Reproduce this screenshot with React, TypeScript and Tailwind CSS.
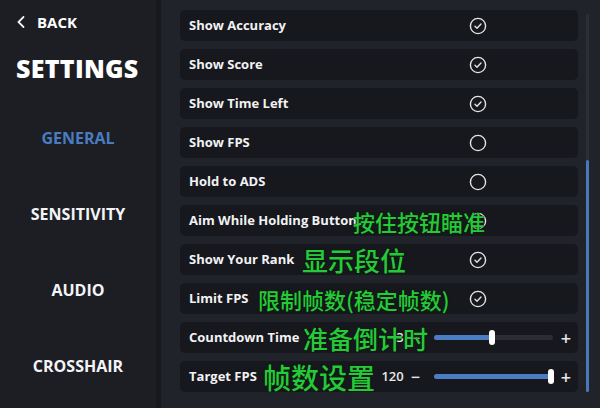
import type { ReactNode } from 'react';

type Row = {
  label: string;
  kind: 'check' | 'empty' | 'slider';
  value?: string;
  fill?: number;
  note?: { text: string; left: number; size: string };
};

const ROWS: Row[] = [
  { label: 'Show Accuracy', kind: 'check' },
  { label: 'Show Score', kind: 'check' },
  { label: 'Show Time Left', kind: 'check' },
  { label: 'Show FPS', kind: 'empty' },
  { label: 'Hold to ADS', kind: 'empty' },
  {
    label: 'Aim While Holding Button',
    kind: 'empty',
    note: { text: '按住按钮瞄准', left: 173, size: 'text-[22px]' },
  },
  {
    label: 'Show Your Rank',
    kind: 'check',
    note: { text: '显示段位', left: 122, size: 'text-[26px]' },
  },
  {
    label: 'Limit FPS',
    kind: 'check',
    note: { text: '限制帧数(稳定帧数)', left: 78, size: 'text-[22px]' },
  },
  {
    label: 'Countdown Time',
    kind: 'slider',
    value: '3',
    fill: 0.5,
    note: { text: '准备倒计时', left: 123, size: 'text-[25px]' },
  },
  {
    label: 'Target FPS',
    kind: 'slider',
    value: '120',
    fill: 1,
    note: { text: '帧数设置', left: 83, size: 'text-[28px]' },
  },
];

const NAV = ['GENERAL', 'SENSITIVITY', 'AUDIO', 'CROSSHAIR'];

function Toggle({ on }: { on: boolean }) {
  return (
    <svg width="18" height="18" viewBox="0 0 18 18" fill="none" className="mr-[91px]">
      <circle cx="9" cy="9" r="7.6" stroke="#e4e4e6" strokeWidth="1.4" />
      {on && (
        <path
          d="M6 9.3l2 1.9 4-4.1"
          stroke="#e4e4e6"
          strokeWidth="1.4"
          strokeLinecap="round"
          strokeLinejoin="round"
        />
      )}
    </svg>
  );
}

function Slider({ value, fill }: { value: string; fill: number }) {
  return (
    <div className="flex items-center text-[13px] font-semibold text-[#e8e8ea]">
      <span className="w-[30px] pr-[7px] text-right">{value}</span>
      <span className="w-[14px] text-[16px] leading-none">−</span>
      <div className="relative ml-[9px] h-[5px] w-[119px] rounded-full bg-[#2b2d34]">
        <div
          className="h-full rounded-full bg-[#4b7dc4]"
          style={{ width: `${fill * 100}%` }}
        />
        <div
          className="absolute top-[-5px] h-[15px] w-[6px] -translate-x-1/2 rounded-[3px] bg-white"
          style={{ left: `calc(${fill * 100}% - ${fill * 2}px)` }}
        />
      </div>
      <span className="ml-[8px] mr-[7px] text-[18px] leading-none">+</span>
    </div>
  );
}

function SettingRow({ row }: { row: Row }) {
  let control: ReactNode;
  if (row.kind === 'slider') control = <Slider value={row.value!} fill={row.fill!} />;
  else control = <Toggle on={row.kind === 'check'} />;

  return (
    <div className="relative flex h-[31px] items-center justify-between rounded-[5px] bg-[#17181d] pl-[9px]">
      <span className="text-[13px] font-bold text-[#f2f2f4]">{row.label}</span>
      {control}
      {row.note && (
        <span
          className={`absolute top-1/2 -translate-y-1/2 whitespace-nowrap font-['Noto_Sans_CJK_SC',sans-serif] font-medium leading-none text-[#27c93a] [text-shadow:0_0_2px_#0a2a0a,0_0_1px_#000] ${row.note.size}`}
          style={{ left: row.note.left }}
        >
          {row.note.text}
        </span>
      )}
    </div>
  );
}

export default function App() {
  return (
    <div className="flex h-[408px] w-[600px] overflow-hidden bg-[#20232a] font-['Open_Sans',sans-serif]">
      {/* barra lateral */}
      <div className="flex w-[156px] flex-col bg-[#1c1e24] text-white">
        <div className="flex items-center pl-[16px] pt-[12px]">
          <svg width="10" height="14" viewBox="0 0 10 14" fill="none">
            <path d="M7.5 2L2.5 7l5 5" stroke="#f2f2f2" strokeWidth="1.8" strokeLinecap="round" />
          </svg>
          <span className="ml-[11px] text-[15px] font-bold leading-[20px]">BACK</span>
        </div>
        <div className="mt-[21px] pl-[16px] text-[25px] font-extrabold leading-[30px] tracking-[0.3px]">
          SETTINGS
        </div>
        <div className="mt-[44px] flex flex-col">
          {NAV.map((n, i) => (
            <div
              key={n}
              className={`flex h-[76px] items-start justify-center text-[16px] font-bold leading-[22px] ${
                i === 0 ? 'text-[#4a7cc0]' : 'text-[#f4f4f6]'
              }`}
            >
              {n}
            </div>
          ))}
        </div>
      </div>
      <div className="w-[5px] bg-[#17191e]" />

      {/* lista de opciones */}
      <div className="flex flex-1 pl-[19px] pt-[10px]">
        <div className="flex w-[398px] flex-col gap-[8px]">
          {ROWS.map((r) => (
            <SettingRow key={r.label} row={r} />
          ))}
        </div>
        <div className="ml-[8px] mt-[4px] flex h-[378px] w-[3px] flex-col justify-end rounded-full bg-[#2c2f38]">
          <div className="h-[232px] rounded-full bg-[#4a78b8]" />
        </div>
      </div>
    </div>
  );
}
